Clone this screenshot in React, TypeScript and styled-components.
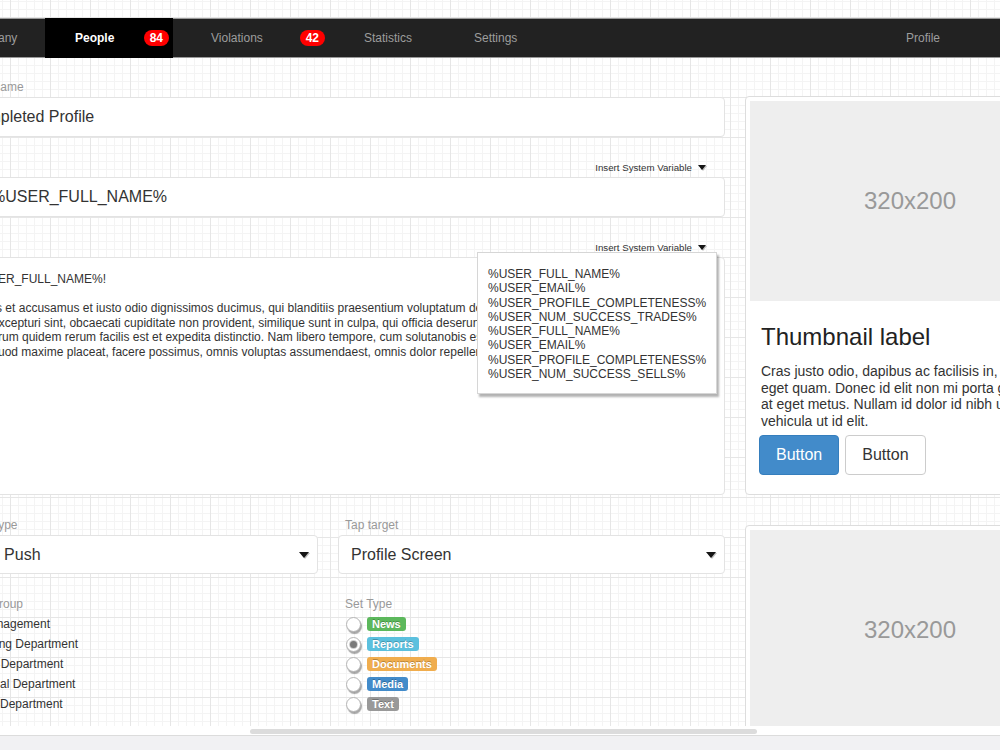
import React from 'react';
import styled, { createGlobalStyle } from 'styled-components';

const GlobalStyle = createGlobalStyle`
  html, body { margin: 0; padding: 0; background: #fff; }
  body { font-family: "Liberation Sans", Arial, sans-serif; color: #333; }
  * { box-sizing: border-box; }
`;

const Page = styled.div`
  display: flex;
  flex-direction: column;
  width: 1000px;
  height: 750px;
  overflow: hidden;
`;

const Viewport = styled.div`
  flex: 1;
  overflow: hidden;
  background-color: #fff;
  background-image:
    linear-gradient(to right, #e6e6e6 1px, transparent 1px),
    linear-gradient(to bottom, #e6e6e6 1px, transparent 1px),
    linear-gradient(to right, #f4f4f4 1px, transparent 1px),
    linear-gradient(to bottom, #f4f4f4 1px, transparent 1px);
  background-size: 40px 40px, 40px 40px, 8px 8px, 8px 8px;
  background-position: 10px 17px, 10px 17px, 2px 1px, 2px 1px;
`;

const Canvas = styled.div`
  width: 1180px;
  padding-top: 18px;
`;

const NavBar = styled.nav`
  display: flex;
  height: 40px;
  background: #222;
  border-top: 1px solid #9a9a9a;
  border-bottom: 1px solid #9a9a9a;
  padding-left: 16px;
`;

const NavTab = styled.a<{ $active?: boolean; $width?: number; $pl: number; $pr?: number; $push?: boolean }>`
  display: flex;
  align-items: center;
  justify-content: space-between;
  width: ${(p) => (p.$width ? `${p.$width}px` : 'auto')};
  padding-left: ${(p) => p.$pl}px;
  padding-right: ${(p) => p.$pr ?? 4}px;
  margin: -1px 0;
  margin-left: ${(p) => (p.$push ? 'auto' : '0')};
  background: ${(p) => (p.$active ? '#000' : 'transparent')};
  color: ${(p) => (p.$active ? '#fff' : '#9d9d9d')};
  font-weight: ${(p) => (p.$active ? 'bold' : 'normal')};
  font-size: 12px;
  text-decoration: none;
  white-space: nowrap;
`;

const NavBadge = styled.span`
  display: inline-flex;
  align-items: center;
  justify-content: center;
  min-width: 25px;
  height: 16px;
  padding: 0 6px;
  border-radius: 8px;
  background: #f00;
  color: #fff;
  font-weight: bold;
  font-size: 12px;
`;

const Main = styled.div`
  display: flex;
  gap: 20px;
  padding: 19px 25px 0 34px;
`;

const FormCol = styled.div`
  width: 771px;
  display: flex;
  flex-direction: column;
  gap: 20px;
`;

const Field = styled.div`
  position: relative;
  display: flex;
  flex-direction: column;
`;

const LabelRow = styled.div<{ $end?: boolean }>`
  height: 20px;
  display: flex;
  align-items: center;
  justify-content: ${(p) => (p.$end ? 'flex-end' : 'flex-start')};
  padding: ${(p) => (p.$end ? '0 19px 0 0' : '0 0 0 7px')};
  font-size: 12px;
  color: #999;
  white-space: nowrap;
`;

const VarToggle = styled.span`
  display: inline-flex;
  align-items: center;
  gap: 6px;
  font-size: 9.7px;
  color: #333;
`;

const Caret = styled.span<{ $size?: number }>`
  display: inline-block;
  width: 0;
  height: 0;
  border-left: ${(p) => (p.$size ?? 4)}px solid transparent;
  border-right: ${(p) => (p.$size ?? 4)}px solid transparent;
  border-top: ${(p) => Math.round((p.$size ?? 4) * 1.2)}px solid #151515;
  filter: drop-shadow(1px 1px 0 rgba(0, 0, 0, 0.25));
`;

const TextBox = styled.div`
  height: 40px;
  display: flex;
  align-items: center;
  padding: 0 12px;
  background: #fff;
  border: 1px solid #e3e3e3;
  border-radius: 4px;
  font-size: 16px;
  color: #333;
  white-space: nowrap;
  overflow: hidden;
`;

const Editor = styled.div`
  height: 238px;
  padding: 14px 1px;
  background: #fff;
  border: 1px solid #e3e3e3;
  border-radius: 4px;
  font-size: 12px;
  line-height: 14.5px;
  color: #333;
  white-space: nowrap;
  overflow: hidden;
`;

const EditorLine = styled.div<{ $gap?: boolean }>`
  margin-bottom: ${(p) => (p.$gap ? '14.5px' : '0')};
`;

const VarMenu = styled.ul`
  position: absolute;
  top: 15px;
  right: 8px;
  width: 240px;
  margin: 0;
  padding: 14px 10px 12px;
  list-style: none;
  background: #fff;
  border: 1px solid #d6d6d6;
  box-shadow: 2px 3px 2px rgba(0, 0, 0, 0.3);
  font-size: 12px;
  line-height: 14.3px;
  color: #333;
  z-index: 2;
`;

const TwoCol = styled.div`
  display: grid;
  grid-template-columns: 1fr 387px;
  column-gap: 20px;
`;

const SelectBox = styled.div`
  height: 39px;
  display: flex;
  align-items: center;
  justify-content: space-between;
  padding: 0 8px 0 12px;
  background: #fff;
  border: 1px solid #e3e3e3;
  border-radius: 4px;
  font-size: 16px;
  color: #333;
  white-space: nowrap;
`;

const OptionList = styled.div<{ $pl: number }>`
  display: flex;
  flex-direction: column;
  padding-left: ${(p) => p.$pl}px;
`;

const OptionRow = styled.label`
  height: 20px;
  display: flex;
  align-items: center;
  font-size: 12px;
  color: #333;
  white-space: nowrap;
`;

const CheckBox = styled.input`
  appearance: none;
  width: 14px;
  height: 14px;
  margin: 0 5px 0 1px;
  border: 1px solid #aaa;
  border-radius: 2px;
  background: #fff;
  box-shadow: 1px 2px 1px rgba(0, 0, 0, 0.3);
`;

const Radio = styled.input`
  appearance: none;
  position: relative;
  width: 15px;
  height: 15px;
  margin: 0 6px 0 1px;
  border: 1px solid #b5b5b5;
  border-radius: 50%;
  background: #fff;
  box-shadow: 1px 2px 1px rgba(0, 0, 0, 0.35);
  &:checked::after {
    content: '';
    position: absolute;
    left: 3px;
    top: 3px;
    width: 7px;
    height: 7px;
    border-radius: 50%;
    background: #7a7a7a;
    box-shadow: 0 0 0 1px #cfcfcf;
  }
`;

const Tag = styled.span<{ $color: string }>`
  display: inline-block;
  padding: 1px 5px;
  border-radius: 3px;
  background: ${(p) => p.$color};
  color: #fff;
  font-size: 11px;
  line-height: 12px;
  font-weight: bold;
  text-shadow: 0 -1px 0 rgba(0, 0, 0, 0.25);
`;

const SideCol = styled.div`
  width: 330px;
  flex-shrink: 0;
  padding-top: 19px;
  display: flex;
  flex-direction: column;
  gap: 30px;
`;

const Thumbnail = styled.div`
  padding: 4px;
  background: #fff;
  border: 1px solid #ddd;
  border-radius: 4px;
`;

const Placeholder = styled.div`
  width: 320px;
  height: 200px;
  display: flex;
  align-items: center;
  justify-content: center;
  background: #eee;
  color: #999;
  font-size: 24px;
`;

const Caption = styled.div`
  padding: 9px 13px 9px 11px;
  color: #333;
`;

const CaptionTitle = styled.h3`
  margin: 14px 0 13px;
  font-size: 24px;
  line-height: 26px;
  font-weight: 500;
  color: #222;
`;

const CaptionText = styled.p`
  margin: 0 0 6px;
  font-size: 14px;
  line-height: 16.6px;
`;

const ButtonRow = styled.div`
  display: flex;
  gap: 6px;
  margin-left: -2px;
  margin-bottom: 6px;
`;

const Button = styled.button<{ $primary?: boolean }>`
  height: 40px;
  padding: 0 16px;
  border-radius: 4px;
  border: 1px solid ${(p) => (p.$primary ? '#357ebd' : '#ccc')};
  background: ${(p) => (p.$primary ? '#428bca' : '#fff')};
  color: ${(p) => (p.$primary ? '#fff' : '#333')};
  font-family: inherit;
  font-size: 16px;
`;

const ScrollTrack = styled.div`
  height: 9px;
  padding-top: 3px;
  background: #fff;
`;

const ScrollThumb = styled.div`
  width: 507px;
  height: 5px;
  margin-left: 250px;
  border-radius: 3px;
  background: #dcdcdc;
`;

const BottomBar = styled.div`
  height: 15px;
  background: #f1f1f3;
  border-top: 1px solid #dcdcdc;
`;

const variables = [
  '%USER_FULL_NAME%',
  '%USER_EMAIL%',
  '%USER_PROFILE_COMPLETENESS%',
  '%USER_NUM_SUCCESS_TRADES%',
  '%USER_FULL_NAME%',
  '%USER_EMAIL%',
  '%USER_PROFILE_COMPLETENESS%',
  '%USER_NUM_SUCCESS_SELLS%',
];

const bodyLines = [
  'vero eos et accusamus et iusto odio dignissimos ducimus, qui blanditiis praesentium voluptatum deleniti atque corrupti quos dolores',
  'saepe excepturi sint, obcaecati cupiditate non provident, similique sunt in culpa, qui officia deserunt mollitia animi, id est laborum',
  'Nam harum quidem rerum facilis est et expedita distinctio. Nam libero tempore, cum solutanobis est eligendi optio cumque nihil impedit',
  'minus quod maxime placeat, facere possimus, omnis voluptas assumendaest, omnis dolor repellendus.',
];

const groups = ['Management', 'Billing Department', 'HR Department', 'Legal Department', 'PR Department'];

const setTypes = [
  { name: 'News', color: '#5cb85c' },
  { name: 'Reports', color: '#5bc0de', checked: true },
  { name: 'Documents', color: '#f0ad4e' },
  { name: 'Media', color: '#428bca' },
  { name: 'Text', color: '#999' },
];

const captionText =
  'Cras justo odio, dapibus ac facilisis in, egestas eget quam. Donec id elit non mi porta gravida at eget metus. Nullam id dolor id nibh ultricies vehicula ut id elit.';

const InsertVariable = () => (
  <LabelRow $end>
    <VarToggle>
      Insert System Variable <Caret />
    </VarToggle>
  </LabelRow>
);

const ThumbCard = () => (
  <Thumbnail>
    <Placeholder>320x200</Placeholder>
    <Caption>
      <CaptionTitle>Thumbnail label</CaptionTitle>
      <CaptionText>{captionText}</CaptionText>
      <ButtonRow>
        <Button $primary>Button</Button>
        <Button>Button</Button>
      </ButtonRow>
    </Caption>
  </Thumbnail>
);

export default function App() {
  return (
    <Page>
      <GlobalStyle />
      <Viewport
        ref={(el) => {
          if (el) el.scrollLeft = 80;
        }}
      >
        <Canvas>
          <NavBar>
            <NavTab $width={109} $pl={30} href="#">Company</NavTab>
            <NavTab $active $width={128} $pl={30} href="#">
              People <NavBadge>84</NavBadge>
            </NavTab>
            <NavTab $width={156} $pl={38} href="#">
              Violations <NavBadge>42</NavBadge>
            </NavTab>
            <NavTab $width={110} $pl={35} href="#">Statistics</NavTab>
            <NavTab $width={110} $pl={35} href="#">Settings</NavTab>
            <NavTab $push $pl={35} $pr={160} href="#">Profile</NavTab>
          </NavBar>

          <Main>
            <FormCol>
              <Field>
                <LabelRow>Push Name</LabelRow>
                <TextBox>Completed Profile</TextBox>
              </Field>
              <Field>
                <InsertVariable />
                <TextBox>Hi, %USER_FULL_NAME%</TextBox>
              </Field>
              <Field>
                <InsertVariable />
                <Editor>
                  <EditorLine $gap>Hi %USER_FULL_NAME%!</EditorLine>
                  {bodyLines.map((l, i) => (
                    <EditorLine key={i}>{l}</EditorLine>
                  ))}
                </Editor>
                <VarMenu>
                  {variables.map((v, i) => (
                    <li key={i}>{v}</li>
                  ))}
                </VarMenu>
              </Field>
              <TwoCol>
                <Field>
                  <LabelRow>Push Type</LabelRow>
                  <SelectBox>
                    Web Push <Caret $size={5} />
                  </SelectBox>
                </Field>
                <Field>
                  <LabelRow>Tap target</LabelRow>
                  <SelectBox>
                    Profile Screen <Caret $size={5} />
                  </SelectBox>
                </Field>
              </TwoCol>
              <TwoCol>
                <Field>
                  <LabelRow>User Group</LabelRow>
                  <OptionList $pl={6}>
                    {groups.map((g) => (
                      <OptionRow key={g}>
                        <CheckBox type="checkbox" />
                        {g}
                      </OptionRow>
                    ))}
                  </OptionList>
                </Field>
                <Field>
                  <LabelRow>Set Type</LabelRow>
                  <OptionList $pl={7}>
                    {setTypes.map((t) => (
                      <OptionRow key={t.name}>
                        <Radio type="radio" name="settype" defaultChecked={!!t.checked} />
                        <Tag $color={t.color}>{t.name}</Tag>
                      </OptionRow>
                    ))}
                  </OptionList>
                </Field>
              </TwoCol>
            </FormCol>

            <SideCol>
              <ThumbCard />
              <ThumbCard />
            </SideCol>
          </Main>
        </Canvas>
      </Viewport>
      <ScrollTrack>
        <ScrollThumb />
      </ScrollTrack>
      <BottomBar />
    </Page>
  );
}
